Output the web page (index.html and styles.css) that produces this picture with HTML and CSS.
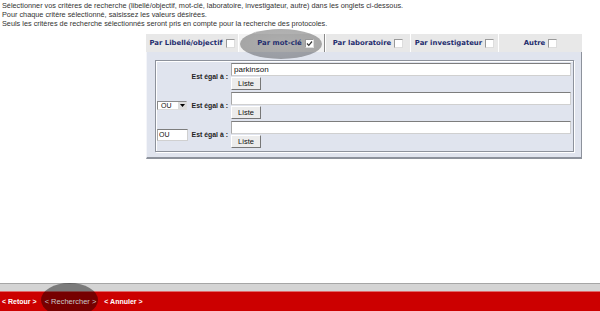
FILE: index.html
```html
<!DOCTYPE html>
<html lang="fr">
<head>
  <meta charset="UTF-8">
  <title>Recherche de protocoles</title>
  <link rel="stylesheet" href="styles.css">
</head>
<body>
  <div class="page">
    <div class="intro">
      <p>Sélectionner vos critères de recherche (libellé/objectif, mot-clé, laboratoire, investigateur, autre) dans les onglets ci-dessous.</p>
      <p>Pour chaque critère sélectionné, saisissez les valeurs désirées.</p>
      <p>Seuls les critères de recherche sélectionnés seront pris en compte pour la recherche des protocoles.</p>
    </div>

    <div class="search">
      <div class="tabs">
        <div class="tab tab-libelle">Par Libellé/objectif <span class="box"></span></div>
        <div class="tab tab-motcle active">
          <span class="spot"></span>
          <span class="tab-label">Par mot-clé <span class="box"><svg width="7" height="7" viewBox="0 0 7 7"><path d="M1 3.5 L2.8 5.3 L6 1.5" fill="none" stroke="#333" stroke-width="1.2"/></svg></span></span>
        </div>
        <div class="tab tab-labo">Par laboratoire <span class="box"></span></div>
        <div class="tab tab-invest">Par investigateur <span class="box"></span></div>
        <div class="tab tab-autre">Autre <span class="box"></span></div>
      </div>

      <div class="panel">
        <div class="criteria">
          <div class="row">
            <div class="op"></div>
            <label class="lbl">Est égal à :</label>
            <div class="field">
              <input type="text" class="value" value="parkinson">
              <button class="list">Liste</button>
            </div>
          </div>
          <div class="row">
            <div class="op">
              <span class="combo">OU<span class="arrow"><svg width="5" height="3" viewBox="0 0 5 3"><path d="M0 0 H5 L2.5 3 Z" fill="#000"/></svg></span></span>
            </div>
            <label class="lbl">Est égal à :</label>
            <div class="field">
              <input type="text" class="value">
              <button class="list">Liste</button>
            </div>
          </div>
          <div class="row">
            <div class="op">
              <input type="text" class="op-text" value="OU">
            </div>
            <label class="lbl">Est égal à :</label>
            <div class="field">
              <input type="text" class="value">
              <button class="list">Liste</button>
            </div>
          </div>
        </div>
      </div>
    </div>
  </div>

  <div class="footer">
    <div class="strip"></div>
    <div class="actions">
      <a href="#" class="action">&lt; Retour &gt;</a>
      <a href="#" class="action disabled">&lt; Rechercher &gt;</a>
      <a href="#" class="action">&lt; Annuler &gt;</a>
    </div>
    <span class="spot-dark"></span>
  </div>
</body>
</html>
```

FILE: styles.css
```css
html, body {
  height: 100%;
}

body {
  margin: 0;
  font-family: "Liberation Sans", Arial, sans-serif;
  background-color: #fff;
  display: flex;
  flex-direction: column;
  overflow: hidden;
}

.page {
  flex: 1;
}

.intro {
  padding: 1px 2px 0;
  font-size: 7.3px;
  color: #333;
}

.intro p {
  margin: 0;
  line-height: 9px;
}

.search {
  width: 436px;
  margin: 6px 0 0 146px;
}

/* onglets */
.tabs {
  display: flex;
  height: 18px;
  background-color: #e8e8e8;
}

.tab {
  display: flex;
  align-items: center;
  justify-content: center;
  gap: 3px;
  font-family: "DejaVu Sans", Verdana, sans-serif;
  font-size: 6.9px;
  font-weight: bold;
  color: #1f2d6e;
  border-left: 1px solid #fff;
  white-space: nowrap;
}

.tab-libelle { width: 92px; border-left: none; }
.tab-motcle { width: 85px; }
.tab-labo { width: 84px; }
.tab-invest { width: 87px; }
.tab-autre { flex: 1; }

.tab.active {
  position: relative;
  background-color: #f2f2f2;
  border-right: 1px solid #8a8a8a;
}

.tab-label {
  position: relative;
  display: flex;
  align-items: center;
  gap: 3px;
  margin-left: 8px;
}

.spot {
  position: absolute;
  left: 1px;
  top: -5px;
  width: 82px;
  height: 30px;
  border-radius: 50%;
  background: radial-gradient(ellipse at center, rgba(0,0,0,0.28) 0%, rgba(0,0,0,0.32) 80%, rgba(0,0,0,0.2) 100%);
}

.box {
  display: inline-flex;
  align-items: center;
  justify-content: center;
  width: 7px;
  height: 7px;
  background-color: #fff;
  border: 1px solid #999;
  border-right-color: #ddd;
  border-bottom-color: #ddd;
}

/* panneau */
.panel {
  background-color: #e0e4ee;
  border-left: 1px solid #f4f5f9;
  border-right: 1px solid #8d929c;
  border-bottom: 2px solid #8d929c;
  padding: 8px 7px 5px 8px;
}

.criteria {
  border: 1px solid #8d929c;
  box-shadow: 1px 1px 0 #fff, inset 1px 1px 0 #fff;
  padding: 2px 2px 3px 1px;
  display: flex;
  flex-direction: column;
  gap: 2px;
}

.row {
  display: flex;
  align-items: center;
}

.op {
  width: 32px;
  display: flex;
}

.lbl {
  width: 39px;
  text-align: right;
  font-size: 6.9px;
  font-weight: bold;
  color: #222;
  margin-right: 3px;
  white-space: nowrap;
}

.field {
  flex: 1;
  display: flex;
  flex-direction: column;
  align-items: flex-start;
  gap: 1px;
}

.value {
  width: 100%;
  height: 13px;
  box-sizing: border-box;
  margin: 0;
  padding: 0 2px;
  border: 1px solid #d0d0d0;
  border-top-color: #7d7d7d;
  border-left-color: #a8a8a8;
  background-color: #fff;
  font-family: "Liberation Sans", Arial, sans-serif;
  font-size: 8px;
  color: #111;
}

.list {
  height: 13px;
  width: 30px;
  padding: 0;
  margin: 0;
  background-color: #ececec;
  border: 1px solid #fff;
  border-right-color: #777;
  border-bottom-color: #777;
  font-family: "Liberation Sans", Arial, sans-serif;
  font-size: 7.5px;
  color: #111;
}

.combo {
  display: flex;
  align-items: center;
  justify-content: space-between;
  width: 30px;
  height: 9px;
  box-sizing: border-box;
  background-color: #fff;
  border: 1px solid #8a8a8a;
  border-right-color: #ddd;
  border-bottom-color: #ddd;
  padding-left: 3px;
  font-size: 7px;
  color: #111;
}

.arrow {
  display: flex;
  align-items: center;
  justify-content: center;
  width: 8px;
  height: 7px;
  background-color: #dcdcdc;
  border-left: 1px solid #fff;
}

.op-text {
  width: 31px;
  height: 12px;
  box-sizing: border-box;
  margin: 0;
  padding: 0 1px;
  border: 1px solid #d0d0d0;
  border-top-color: #7d7d7d;
  border-left-color: #a8a8a8;
  font-family: "Liberation Sans", Arial, sans-serif;
  font-size: 7px;
  color: #111;
}

/* barre du bas */
.footer {
  position: relative;
  overflow: hidden;
}

.strip {
  height: 7px;
  background-color: #d4d4d4;
  border-top: 1px solid #a6a6a6;
}

.actions {
  background-color: #cc0000;
  border-top: 1px solid #e06a6a;
  height: 19px;
  display: flex;
  align-items: center;
  gap: 8px;
  padding-left: 2px;
}

.action {
  font-size: 7px;
  font-weight: bold;
  color: #fff;
  text-decoration: none;
  position: relative;
  z-index: 1;
}

.action.disabled {
  font-weight: normal;
  font-size: 7.5px;
  color: #c9c9c9;
}

.spot-dark {
  position: absolute;
  left: 41px;
  top: 0;
  width: 57px;
  height: 34px;
  border-radius: 50%;
  background-color: rgba(0, 0, 0, 0.42);
}
```
